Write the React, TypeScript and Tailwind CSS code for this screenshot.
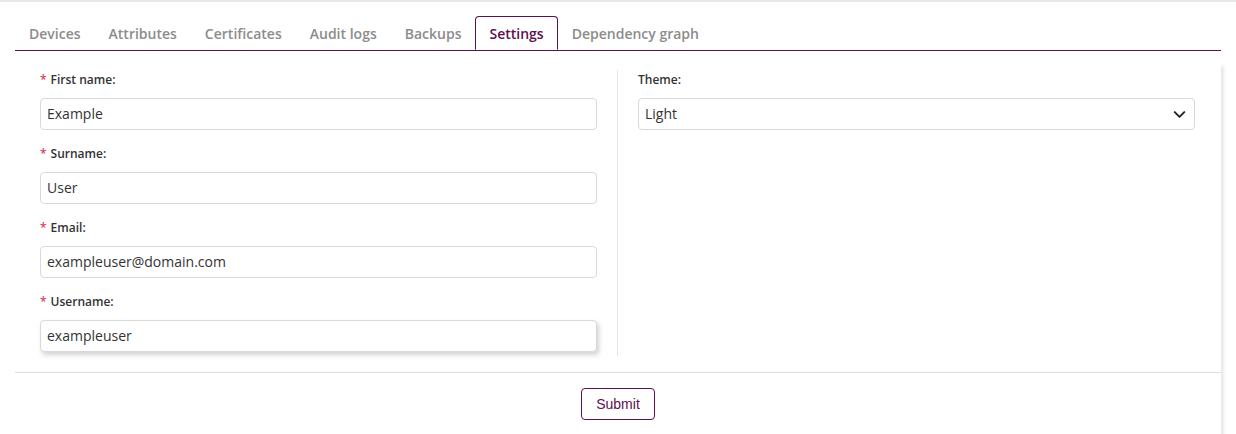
import React from 'react';
import { ChevronDown } from 'lucide-react';

const tabs = ['Devices', 'Attributes', 'Certificates', 'Audit logs', 'Backups', 'Settings', 'Dependency graph'];

const fields = [
  { label: 'First name:', value: 'Example' },
  { label: 'Surname:', value: 'User' },
  { label: 'Email:', value: 'exampleuser@domain.com' },
  { label: 'Username:', value: 'exampleuser', focused: true },
];

function Field({ label, value, focused }: { label: string; value: string; focused?: boolean }) {
  return (
    <div className={focused ? 'mb-[4px]' : 'mb-[14px]'}>
      <label className="block h-[19px] leading-[18px] pt-px mb-[9px] text-[12px] font-semibold text-[#333]">
        <span className="text-[#e03a5f] mr-[4px]">*</span>
        {label}
      </label>
      <input
        type="text"
        defaultValue={value}
        className={`block w-full h-[32px] rounded-[4px] border border-[#d9d9d9] px-[6px] pb-px text-[14px] text-[#333] bg-white outline-none ${
          focused ? 'shadow-[2px_3px_5px_rgba(0,0,0,0.18)]' : ''
        }`}
      />
    </div>
  );
}

export default function App() {
  return (
    <div className="w-full h-[434px] bg-white border-t-2 border-[#e8e8e8] overflow-hidden font-['Open_Sans',sans-serif]">
      <div className="mx-[15px] mt-[14px] flex border-b border-[#5c0f4f]">
        {tabs.map((tab) => {
          const active = tab === 'Settings';
          return (
            <div
              key={tab}
              className={
                active
                  ? 'h-[34px] px-[13px] flex items-center text-[14px] font-semibold text-[#5c0f4f] border border-[#5c0f4f] border-b-white rounded-t-[4px] -mb-px bg-white'
                  : 'h-[34px] px-[13px] flex items-center text-[14px] font-semibold text-[#8c8c8c] border border-transparent'
              }
            >
              {tab}
            </div>
          );
        })}
      </div>

      <div className="mx-[15px] shadow-[4px_14px_3px_-1px_rgba(0,0,0,0.09)]">
        <div className="flex pt-[19px] pl-[25px] pr-[26px] pb-[16px]">
          <div className="flex-1 pr-[20px] border-r border-[#e6e6e6]">
            {fields.map((f) => (
              <Field key={f.label} {...f} />
            ))}
          </div>
          <div className="flex-1 pl-[20px]">
            <label className="block h-[19px] leading-[18px] pt-px mb-[9px] text-[12px] font-semibold text-[#333]">
              Theme:
            </label>
            <div className="relative h-[32px] rounded-[4px] border border-[#d9d9d9] flex items-center px-[6px] pb-px text-[14px] text-[#333]">
              Light
              <ChevronDown className="absolute right-[5px] top-[6px] w-[19px] h-[19px] text-[#222]" strokeWidth={2.4} />
            </div>
          </div>
        </div>
        <div className="border-t border-[#dcdcdc] flex justify-center pt-[15px] pb-[20px]">
          <button className="h-[32px] w-[74px] rounded-[4px] border border-[#5c0f4f] text-[#5c0f4f] text-[14px] font-['Liberation_Sans',Arial,sans-serif] bg-white">
            Submit
          </button>
        </div>
      </div>
    </div>
  );
}
